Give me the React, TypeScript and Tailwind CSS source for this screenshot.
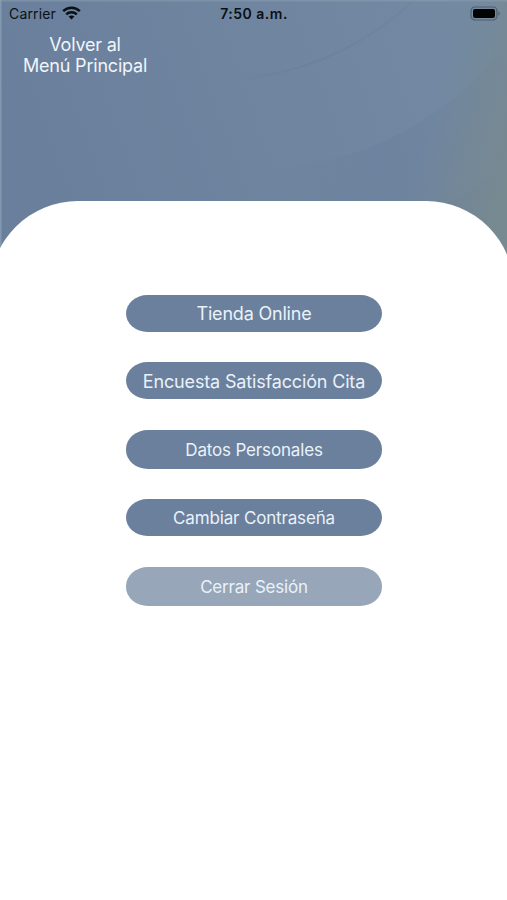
import React from 'react';

interface MenuItem {
  label: string;
  className: string;
}

const menuItems: MenuItem[] = [
  { label: 'Tienda Online', className: 'h-[37px] mb-[30px] bg-[#6b809c] text-[18px] tracking-[-0.2px]' },
  { label: 'Encuesta Satisfacción Cita', className: 'h-[37px] mb-[31px] bg-[#6b809c] pt-px text-[18px] tracking-[-0.16px]' },
  { label: 'Datos Personales', className: 'h-[39px] mb-[30px] bg-[#6b809c] pt-[2px] text-[17px] tracking-[-0.16px]' },
  { label: 'Cambiar Contraseña', className: 'h-[37px] mb-[31px] bg-[#6b809c] pt-[2px] text-[17px] tracking-[-0.16px]' },
  { label: 'Cerrar Sesión', className: 'h-[39px] bg-[#97a6b8] pt-[2px] text-[17px] tracking-[-0.2px]' },
];

function WifiIcon() {
  return (
    <svg width="19" height="14" viewBox="0 0 19 14" className="-mt-px ml-[6px]" fill="none" stroke="#0b1016">
      <path d="M1.2 5.2 C5.8 0.6 13.2 0.6 17.8 5.2" strokeWidth="2.5" />
      <path d="M4.2 8.3 C7.1 5.5 11.9 5.5 14.8 8.3" strokeWidth="2.4" />
      <path d="M9.5 13.6 L6.6 10.6 C8.2 9.1 10.8 9.1 12.4 10.6 Z" fill="#0b1016" stroke="none" />
    </svg>
  );
}

function BatteryIcon() {
  return (
    <svg width="31" height="15" viewBox="0 0 31 15">
      <rect x="1" y="1" width="26" height="13" rx="4" fill="none" stroke="#505d6c" strokeWidth="1.2" />
      <rect x="3" y="3" width="22" height="9" rx="2" fill="#020304" />
      <path d="M28.5 5.5 C30.3 6.2 30.3 8.8 28.5 9.5 Z" fill="#505d6c" />
    </svg>
  );
}

// Soft diagonal gradient with faint concentric waves
function HeaderBackground() {
  return (
    <svg className="absolute inset-0" width="507" height="280" viewBox="0 0 507 280">
      <defs>
        <linearGradient id="sky" x1="0" y1="0.3" x2="1" y2="0.1">
          <stop offset="0" stopColor="#6a7f9c" />
          <stop offset="0.45" stopColor="#6e849f" />
          <stop offset="0.85" stopColor="#7389a3" />
          <stop offset="1" stopColor="#738aa0" />
        </linearGradient>
        <linearGradient id="edge" gradientUnits="userSpaceOnUse" x1="435" y1="100" x2="520" y2="125">
          <stop offset="0" stopColor="#778990" stopOpacity="0" />
          <stop offset="1" stopColor="#778990" stopOpacity="0.95" />
        </linearGradient>
        <linearGradient id="wave" x1="0" y1="0" x2="1" y2="0">
          <stop offset="0" stopColor="#60718f" stopOpacity="0" />
          <stop offset="0.5" stopColor="#60718f" stopOpacity="0.18" />
          <stop offset="1" stopColor="#60718f" stopOpacity="0.1" />
        </linearGradient>
        <linearGradient id="crest" gradientUnits="userSpaceOnUse" x1="230" y1="0" x2="420" y2="0">
          <stop offset="0" stopColor="#5e738e" stopOpacity="0" />
          <stop offset="0.4" stopColor="#5e738e" stopOpacity="0.25" />
          <stop offset="1" stopColor="#5e738e" stopOpacity="0.12" />
        </linearGradient>
      </defs>
      <rect width="507" height="280" fill="url(#sky)" />
      <path d="M230 79 C300 76 360 50 414 0" fill="none" stroke="url(#crest)" strokeWidth="2" />
      <path d="M270 168 C370 164 458 112 507 40 V280 H270 Z" fill="url(#wave)" />
      <path d="M430 212 C460 197 488 181 507 161 V280 H430 Z" fill="#60758f" fillOpacity="0.12" />
      <rect width="507" height="280" fill="url(#edge)" />
      <rect width="507" height="1.5" fill="#8a9db0" fillOpacity="0.55" />
      <rect width="1.5" height="280" fill="#8fa4b8" fillOpacity="0.7" />
    </svg>
  );
}

export default function App() {
  return (
    <div className="relative w-[507px] h-[900px] overflow-hidden bg-white font-[Inter,sans-serif]">
      <HeaderBackground />

      <div className="relative flex h-full flex-col">
        {/* Status bar */}
        <div className="grid h-[27px] grid-cols-3 items-center pl-[9px] pr-[6px] text-[#0b1016]">
          <div className="flex items-center">
            <span className="text-[14px] tracking-[0.15px]">Carrier</span>
            <WifiIcon />
          </div>
          <span className="-ml-[2px] text-center text-[14px] font-semibold tracking-[0.5px]">7:50 a.m.</span>
          <div className="flex justify-end">
            <BatteryIcon />
          </div>
        </div>

        <header className="h-[174px] pl-[23px] pt-[7px]">
          <button className="w-[124px] whitespace-nowrap text-center text-[18px] leading-[21px] tracking-[-0.2px] text-[#f0f5fb]">
            Volver al
            <br />
            Menú Principal
          </button>
        </header>

        {/* Content sheet */}
        <main className="-ml-[10px] flex w-[524px] flex-1 flex-col rounded-t-[88px] bg-white pl-[136px] pt-[94px]">
          {menuItems.map((item) => (
            <button
              key={item.label}
              className={`flex w-[256px] shrink-0 items-center justify-center whitespace-nowrap rounded-[22px/19px] text-[#e9f2fb] ${item.className}`}
            >
              {item.label}
            </button>
          ))}
        </main>
      </div>
    </div>
  );
}
